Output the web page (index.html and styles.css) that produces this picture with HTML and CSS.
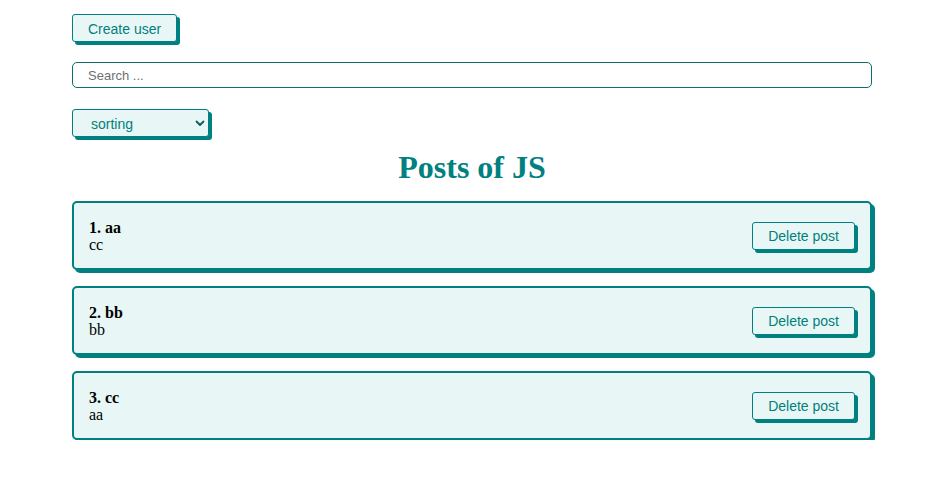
FILE: index.html
```html
<!DOCTYPE html>
<html>
<head>
<meta charset="utf-8">
<link rel="stylesheet" href="styles.css">
</head>
<body>
<div class="app">
  <div class="row"><button class="btn">Create user</button></div>
  <input class="search" type="text" placeholder="Search ...">
  <div class="row">
    <div class="select-wrap">
      <select class="select">
        <option>sorting</option>
        <option>By title</option>
        <option>By description</option>
      </select>
      <svg class="chev" width="10" height="7" viewBox="0 0 10 7"><path d="M1.5 1.5 L5 5 L8.5 1.5" fill="none" stroke="#0b5d5a" stroke-width="1.8" stroke-linecap="round" stroke-linejoin="round"/></svg>
    </div>
  </div>
  <h1 class="title">Posts of JS</h1>
  <div class="list">
    <div class="post">
      <div class="post-body"><strong>1. aa</strong><div>cc</div></div>
      <button class="btn">Delete post</button>
    </div>
    <div class="post">
      <div class="post-body"><strong>2. bb</strong><div>bb</div></div>
      <button class="btn">Delete post</button>
    </div>
    <div class="post">
      <div class="post-body"><strong>3. cc</strong><div>aa</div></div>
      <button class="btn">Delete post</button>
    </div>
  </div>
</div>
</body>
</html>
```
FILE: styles.css
```css
* { box-sizing: border-box; }
body {
  margin: 0;
  font-family: "Liberation Serif", "Times New Roman", serif;
  font-size: 16px;
  background: #fff;
}
.app {
  width: 803px;
  margin-left: 72px;
  padding-top: 14px;
  display: flex;
  flex-direction: column;
}
.row { display: flex; }
.btn {
  font-family: "Liberation Sans", Arial, sans-serif;
  font-size: 14px;
  color: #007f7b;
  background: #e8f7f6;
  border: 1px solid #008080;
  border-radius: 3px;
  box-shadow: 3px 3px 0 #008080;
  padding: 6px 15px 4px;
  height: 28px;
  line-height: 15px;
  cursor: pointer;
}
.search {
  margin-top: 20px;
  width: 800px;
  height: 26px;
  border: 1px solid #0d6f6b;
  border-radius: 5px;
  padding: 0 15px;
  font-family: "Liberation Sans", Arial, sans-serif;
  font-size: 13px;
  outline: none;
}
.search::placeholder { color: #6f6f6f; }
.select-wrap {
  margin-top: 21px;
  position: relative;
  display: flex;
}
.select {
  appearance: none;
  -webkit-appearance: none;
  width: 137px;
  height: 28px;
  border: 1px solid #008080;
  border-radius: 3px;
  box-shadow: 3px 3px 0 #008080;
  background: #e8f7f6;
  color: #007f7b;
  font-family: "Liberation Sans", Arial, sans-serif;
  font-size: 14px;
  padding: 1px 18px 0;
  outline: none;
}
.chev {
  position: absolute;
  left: 123px;
  top: 11px;
  pointer-events: none;
}
.title {
  margin: 12px 0 15px;
  text-align: center;
  color: #008080;
  font-size: 32px;
  font-weight: bold;
  line-height: 37px;
  padding-right: 3px;
}
.list {
  display: flex;
  flex-direction: column;
  gap: 16px;
}
.post {
  width: 800px;
  height: 69px;
  display: flex;
  align-items: center;
  justify-content: space-between;
  border: 2px solid #008080;
  border-radius: 5px;
  box-shadow: 3px 3px 0 #008080;
  background: #e8f7f6;
  padding: 0 15px;
}
.post-body {
  line-height: 17px;
  color: #000;
  padding-top: 1px;
}
```
